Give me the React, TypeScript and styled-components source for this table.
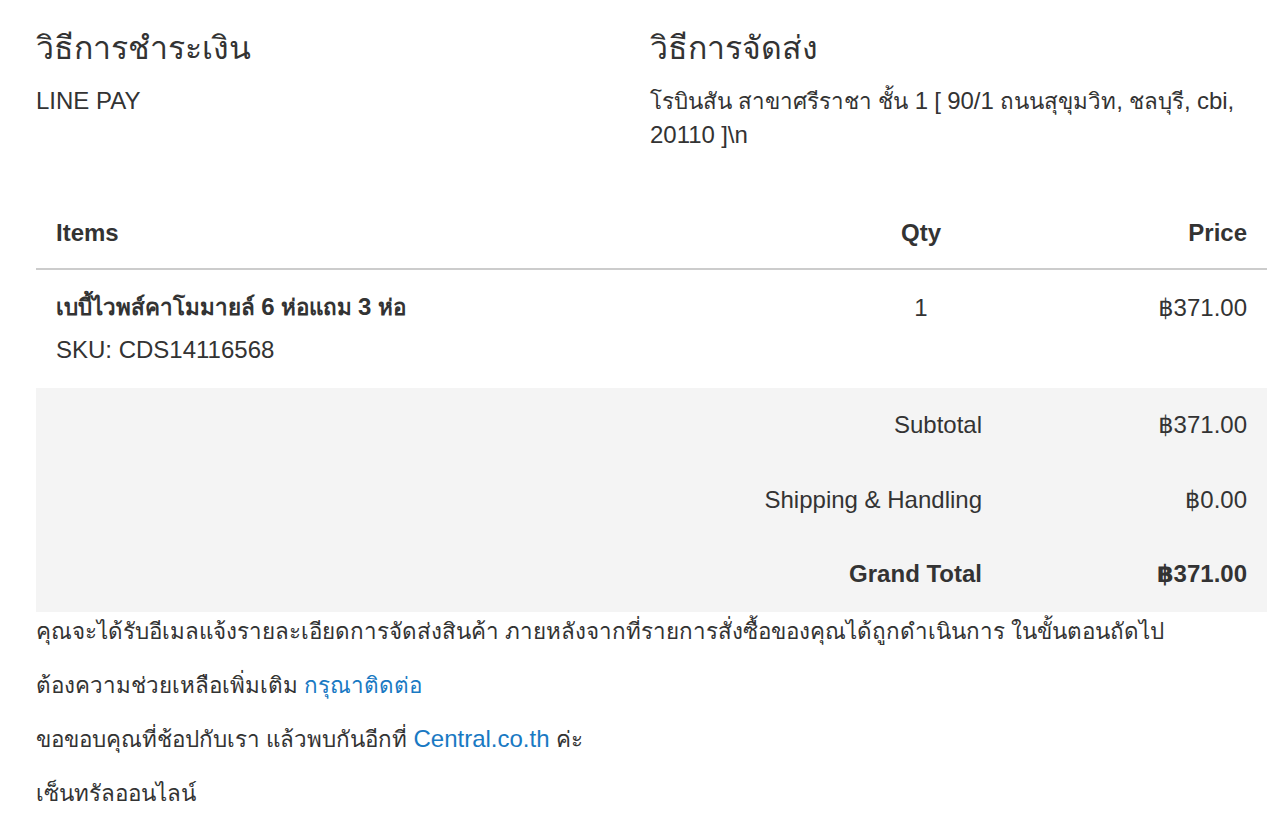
import React from "react";
import styled, { createGlobalStyle } from "styled-components";

const Global = createGlobalStyle`
  html, body { margin: 0; padding: 0; background: #fff; }
  body {
    font-family: "Liberation Sans", Arial, "Noto Sans", "DejaVu Sans", sans-serif;
    color: #333;
    font-size: 22.4px;
    line-height: 34px;
  }
`;

const Page = styled.div`
  padding: 30px 19px 0 36px;
`;

const InfoRow = styled.div`
  display: grid;
  grid-template-columns: 614px 1fr;
`;

const InfoBlock = styled.div`
  padding-right: 20px;
`;

const Heading = styled.h3`
  margin: 0 0 19px;
  font-size: 32px;
  line-height: 36px;
  font-weight: 400;
`;

const InfoText = styled.p`
  margin: 0;
`;

const Lat = styled.span`
  font-size: 24px;
  line-height: 1;
`;

const ItemsGrid = styled.div`
  margin-top: 47px;
  display: grid;
  grid-template-columns: 1fr 162px 265px;
`;

const HeadCell = styled.div<{ $align: "left" | "center" | "right" }>`
  padding: 16px 20px 18px;
  font-size: 24px;
  font-weight: 700;
  text-align: ${(p) => p.$align};
  border-bottom: 2px solid #cccccc;
`;

const BodyCell = styled.div<{ $align: "left" | "center" | "right"; $latin?: boolean }>`
  padding: 21px 20px 21px;
  text-align: ${(p) => p.$align};
  font-size: ${(p) => (p.$latin ? "24px" : "inherit")};
`;

const ItemName = styled.div`
  font-weight: 700;
`;

const Sku = styled.div`
  margin-top: 8px;
  font-size: 24px;
`;

const TotalsLabel = styled.div<{ $strong?: boolean }>`
  grid-column: 1 / span 2;
  background: #f4f4f4;
  padding: 20px 20px 20.67px;
  text-align: right;
  font-size: 24px;
  font-weight: ${(p) => (p.$strong ? 700 : 400)};
`;

const TotalsValue = styled.div<{ $strong?: boolean }>`
  background: #f4f4f4;
  padding: 20px 20px 20.67px;
  text-align: right;
  font-size: 24px;
  font-weight: ${(p) => (p.$strong ? 700 : 400)};
`;

const Footer = styled.div`
  padding-top: 3px;
`;

const Para = styled.p`
  margin: 0 0 20px;
`;

const Link = styled.a`
  color: #1979c3;
  text-decoration: none;
`;

const totals = [
  { label: "Subtotal", value: "฿371.00" },
  { label: "Shipping & Handling", value: "฿0.00" },
  { label: "Grand Total", value: "฿371.00", strong: true },
];

export default function App() {
  return (
    <>
      <Global />
      <Page>
        <InfoRow>
          <InfoBlock>
            <Heading>วิธีการชำระเงิน</Heading>
            <InfoText>
              <Lat>LINE PAY</Lat>
            </InfoText>
          </InfoBlock>
          <InfoBlock>
            <Heading>วิธีการจัดส่ง</Heading>
            <InfoText>
              โรบินสัน สาขาศรีราชา ชั้น <Lat>1</Lat> <Lat>[</Lat> <Lat>90/1</Lat> ถนนสุขุมวิท
              <Lat>,</Lat> ชลบุรี<Lat>,</Lat> <Lat>cbi,</Lat> <Lat>20110</Lat> <Lat>]\n</Lat>
            </InfoText>
          </InfoBlock>
        </InfoRow>

        <ItemsGrid>
          <HeadCell $align="left">Items</HeadCell>
          <HeadCell $align="center">Qty</HeadCell>
          <HeadCell $align="right">Price</HeadCell>

          <BodyCell $align="left">
            <ItemName>
              เบบี้ไวพส์คาโมมายล์ <Lat>6</Lat> ห่อแถม <Lat>3</Lat> ห่อ
            </ItemName>
            <Sku>SKU: CDS14116568</Sku>
          </BodyCell>
          <BodyCell $align="center" $latin>
            1
          </BodyCell>
          <BodyCell $align="right" $latin>
            ฿371.00
          </BodyCell>

          {totals.map((t) => (
            <React.Fragment key={t.label}>
              <TotalsLabel $strong={t.strong}>{t.label}</TotalsLabel>
              <TotalsValue $strong={t.strong}>{t.value}</TotalsValue>
            </React.Fragment>
          ))}
        </ItemsGrid>

        <Footer>
          <Para>
            คุณจะได้รับอีเมลแจ้งรายละเอียดการจัดส่งสินค้า ภายหลังจากที่รายการสั่งซื้อของคุณได้ถูกดำเนินการ ในขั้นตอนถัดไป
          </Para>
          <Para>
            ต้องความช่วยเหลือเพิ่มเติม <Link href="#">กรุณาติดต่อ</Link>
          </Para>
          <Para>
            ขอขอบคุณที่ช้อปกับเรา แล้วพบกันอีกที่{" "}
            <Link href="#">
              <Lat>Central.co.th</Lat>
            </Link>{" "}
            ค่ะ
          </Para>
          <Para>เซ็นทรัลออนไลน์</Para>
        </Footer>
      </Page>
    </>
  );
}
